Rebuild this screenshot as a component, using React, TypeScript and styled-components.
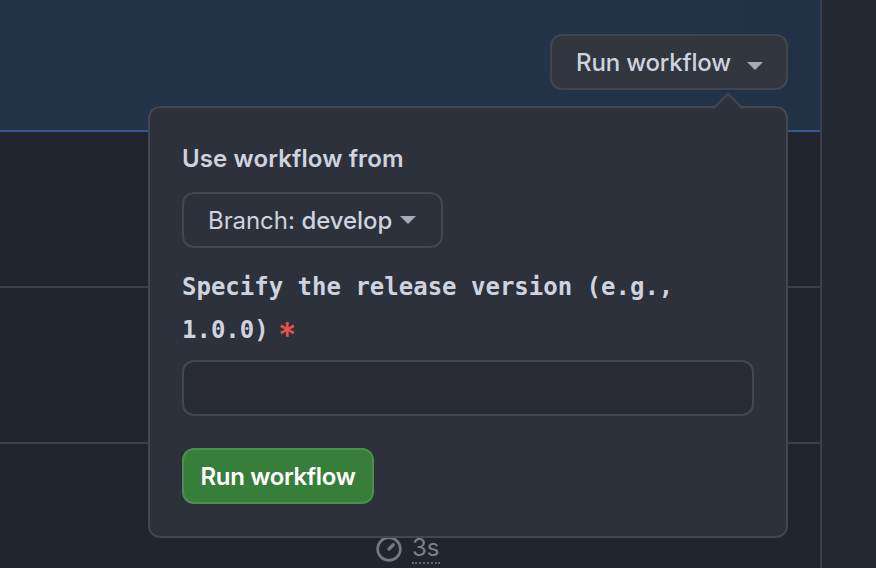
import React from "react";
import styled, { createGlobalStyle } from "styled-components";

const Global = createGlobalStyle`
  html, body { margin: 0; padding: 0; background: #222932; overflow: hidden; }
  * { box-sizing: border-box; }
`;

const Page = styled.div`
  display: flex;
  width: 876px;
  height: 568px;
  overflow: hidden;
  font-family: Inter, "Liberation Sans", sans-serif;
  background: #222932;
`;

const Main = styled.main`
  position: relative;
  width: 822px;
  height: 568px;
  flex: none;
  border-right: 2px solid #3b414b;
  background: #20252e;
`;

const Side = styled.aside`
  flex: 1;
  background: #222932;
`;

const Banner = styled.header`
  display: flex;
  justify-content: flex-end;
  height: 132px;
  padding: 34px 32px 0 0;
  background: linear-gradient(90deg, #243348 0%, #243348 60%, #233146 100%);
  border-bottom: 2px solid #36598f;
`;

const Details = styled.div`
  position: relative;
  height: 56px;
`;

const SummaryButton = styled.button`
  display: flex;
  align-items: center;
  gap: 16px;
  width: 238px;
  height: 56px;
  padding: 2px 0 0 24px;
  font: 500 24px/1 Inter, "Liberation Sans", sans-serif;
  letter-spacing: -0.17px;
  color: #ced3df;
  background: #31363f;
  border: 2px solid #40454f;
  border-radius: 12px;
`;

const Caret = styled.span<{ $offset: number }>`
  display: inline-block;
  width: 0;
  height: 0;
  margin-top: ${(p) => p.$offset}px;
  border-left: 8px solid transparent;
  border-right: 8px solid transparent;
  border-top: 8px solid #a6abb7;
`;

const Popover = styled.div`
  position: absolute;
  top: 72px;
  right: 0;
  width: 640px;
  height: 432px;
  padding: 32px;
  display: flex;
  flex-direction: column;
  align-items: flex-start;
  background: #2c313c;
  border: 2px solid #424751;
  border-radius: 12px;
  &::before {
    content: "";
    position: absolute;
    top: -11px;
    right: 47px;
    width: 20px;
    height: 20px;
    background: #2c313c;
    border-top: 2px solid #424751;
    border-left: 2px solid #424751;
    transform: rotate(45deg);
  }
`;

const Heading = styled.div`
  position: relative;
  height: 38px;
  font: 600 24px/38px Inter, "Liberation Sans", sans-serif;
  letter-spacing: 0.12px;
  color: #ced3df;
`;

const BranchButton = styled.button`
  display: flex;
  align-items: center;
  gap: 8px;
  width: 261px;
  height: 56px;
  margin-top: 14px;
  padding: 2px 0 0 24px;
  font: 400 24px/1 Inter, "Liberation Sans", sans-serif;
  letter-spacing: -0.07px;
  color: #ced3df;
  background: #2c313c;
  border: 2px solid #424751;
  border-radius: 12px;
`;

const BranchName = styled.span`
  font-weight: 500;
`;

const FieldLabel = styled.label`
  display: block;
  width: 572px;
  margin-top: 18px;
  font: 700 24px/43px "DejaVu Sans Mono", "Liberation Mono", monospace;
  color: #ced3df;
`;

const Required = styled.span`
  display: inline-block;
  height: 30px;
  margin-left: 9px;
  font: 500 36px/43px Inter, "Liberation Sans", sans-serif;
  vertical-align: top;
  transform: translateY(5px);
  color: #e5534b;
`;

const TextInput = styled.input`
  display: block;
  width: 572px;
  height: 56px;
  margin-top: 8px;
  background: #292c37;
  border: 2px solid #424751;
  border-radius: 12px;
`;

const SubmitButton = styled.button`
  width: 192px;
  height: 56px;
  margin-top: 32px;
  padding: 2px 0 0;
  font: 600 24px/1 Inter, "Liberation Sans", sans-serif;
  letter-spacing: -0.33px;
  color: #ffffff;
  background: #387e3b;
  border: 2px solid #4a8f4d;
  border-radius: 12px;
`;

const Row = styled.div<{ $h: number }>`
  height: ${(p) => p.$h}px;
  border-bottom: 2px solid #3b414b;
`;

const DurationRow = styled.div`
  display: flex;
  align-items: center;
  gap: 9px;
  padding: 90px 0 0 375px;
`;

const Duration = styled.span`
  font: 400 24px/28px Inter, "Liberation Sans", sans-serif;
  color: #7b818c;
  border-bottom: 2px dotted #5f6670;
`;

function Stopwatch() {
  return (
    <svg width="28" height="28" viewBox="0 0 16 16" fill="none" stroke="#737a85" strokeWidth="1.5" strokeLinecap="round">
      <circle cx="8" cy="8" r="6.5" />
      <path d="M10.4 5.6 L8 8" strokeWidth="1.9" />
    </svg>
  );
}

export default function App() {
  return (
    <Page>
      <Global />
      <Main>
        <Banner>
          <Details>
            <SummaryButton>
              Run workflow
              <Caret $offset={5} />
            </SummaryButton>
            <Popover>
              <Heading>Use workflow from</Heading>
              <BranchButton>
                <span>
                  Branch: <BranchName>develop</BranchName>
                </span>
                <Caret $offset={-2} />
              </BranchButton>
              <FieldLabel>
                Specify the release version (e.g., 1.0.0)<Required>*</Required>
              </FieldLabel>
              <TextInput />
              <SubmitButton>Run workflow</SubmitButton>
            </Popover>
          </Details>
        </Banner>
        <Row $h={156} />
        <Row $h={156} />
        <DurationRow>
          <Stopwatch />
          <Duration>3s</Duration>
        </DurationRow>
      </Main>
      <Side />
    </Page>
  );
}
